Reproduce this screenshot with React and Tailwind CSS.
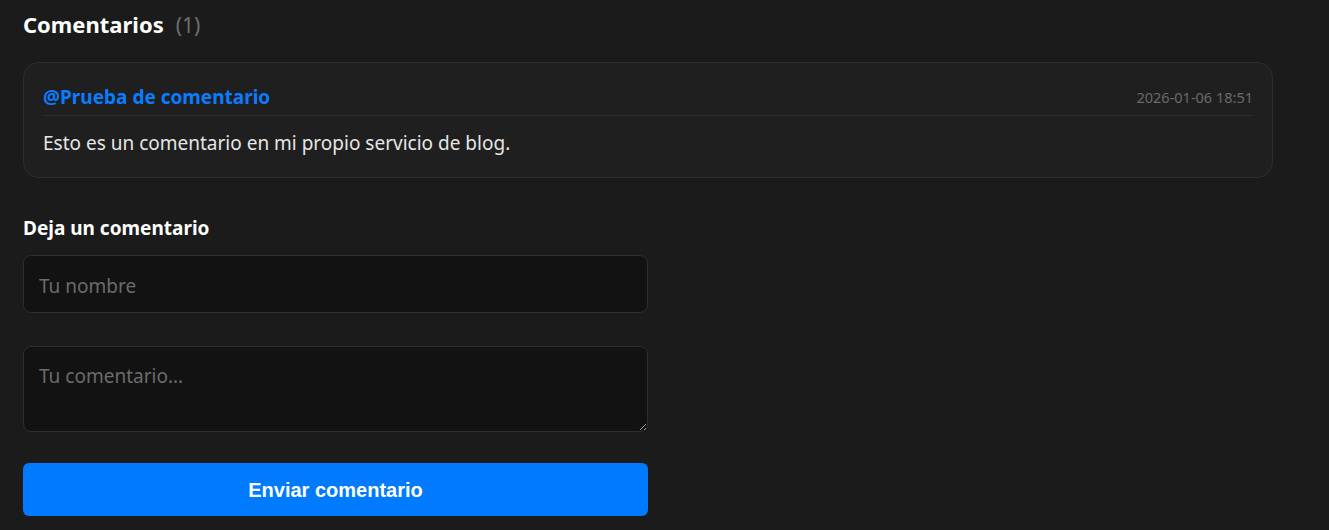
import React from "react";

export default function App() {
  return (
    <div className="min-h-[530px] w-full bg-[#1b1b1b] text-[#e6e6e6]">
      <div className="px-[23px] pt-[9px] font-['Noto_Sans',sans-serif]">
        <h2 className="flex items-baseline gap-[12px] text-[22px] font-bold leading-[30px] text-white">
          Comentarios
          <span className="text-[21px] font-normal text-[#6f6f6f]">(1)</span>
        </h2>

        <div className="mt-[22px] w-[1250px] rounded-[16px] border border-[#2e2e2e] bg-[#1f1f1f] px-[19px] pt-[20px] pb-[19px]">
          <div className="flex items-center justify-between border-b border-[#2e2e2e] pb-[4px]">
            <span className="text-[19px] font-bold leading-[28px] text-[#0a7cff]">@Prueba de comentario</span>
            <span className="text-[14.5px] leading-[20px] text-[#6a6a6a]">2026-01-06 18:51</span>
          </div>
          <p className="mt-[12px] text-[19px] leading-[30px] text-[#e6e6e6]">
            Esto es un comentario en mi propio servicio de blog.
          </p>
        </div>

        <h3 className="mt-[37px] text-[19px] font-bold leading-[26px] text-white">Deja un comentario</h3>

        <form className="mt-[14px] flex w-[625px] flex-col" onSubmit={(e) => e.preventDefault()}>
          <input
            type="text"
            placeholder="Tu nombre"
            className="h-[58px] w-full rounded-[8px] border border-[#2e2e2e] bg-[#121212] px-[15px] pt-[4px] text-[19px] text-[#e6e6e6] outline-none placeholder:text-[#6b6b6b] font-['Noto_Sans',sans-serif]"
          />
          <textarea
            placeholder="Tu comentario..."
            className="mt-[33px] h-[86px] w-full resize-y rounded-[8px] border border-[#2e2e2e] bg-[#121212] px-[15px] py-[16px] text-[19px] leading-[26px] text-[#e6e6e6] outline-none placeholder:text-[#6b6b6b] font-['Noto_Sans',sans-serif]"
          />
          <button
            type="submit"
            className="mt-[31px] h-[53px] w-full rounded-[6px] bg-[#007bff] text-[20px] font-bold text-white font-['Liberation_Sans',Arial,sans-serif]"
          >
            Enviar comentario
          </button>
        </form>
      </div>
    </div>
  );
}
